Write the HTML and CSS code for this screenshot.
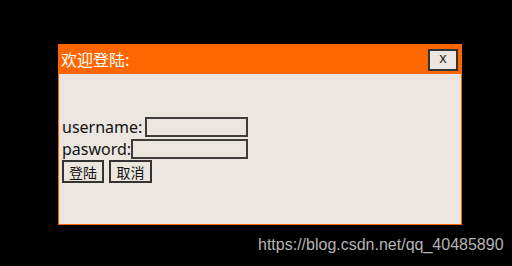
FILE: index.html
```html
<!DOCTYPE html>
<html>
<head>
<meta charset="utf-8">
<link rel="stylesheet" href="styles.css">
</head>
<body>
<div class="stage">
  <div class="dialog">
    <div class="dialog-head">
      <span class="dialog-title">欢迎登陆:</span>
      <button class="close-btn">x</button>
    </div>
    <div class="dialog-body">
      <div class="row"><label class="lbl">username:</label><input class="field field-user" type="text"></div>
      <div class="row"><label class="lbl">pasword:</label><input class="field field-pass" type="password"></div>
      <div class="row actions"><button class="btn">登陆</button><button class="btn">取消</button></div>
    </div>
  </div>
  <div class="watermark">https://blog.csdn.net/qq_40485890</div>
</div>
</body>
</html>
```
FILE: styles.css
```css
html, body {
  margin: 0;
  padding: 0;
  background: #000;
}
.stage {
  width: 512px;
  height: 266px;
  position: relative;
  padding: 44px 0 0 58px;
  box-sizing: border-box;
}
.dialog {
  width: 404px;
  height: 181px;
  box-sizing: border-box;
  border: 1px solid #ff6600;
  background: #ebe6e0;
  display: flex;
  flex-direction: column;
  font-family: "Noto Sans", "Noto Sans CJK SC", sans-serif;
}
.dialog-head {
  height: 30px;
  margin: -1px -1px 0 -1px;
  background: #ff6600;
  display: flex;
  align-items: center;
  justify-content: space-between;
  padding: 0 4px 0 3px;
}
.dialog-title {
  color: #fff;
  font-size: 16px;
  line-height: 20px;
  font-family: "Noto Sans CJK SC", sans-serif;
}
.close-btn {
  width: 30px;
  height: 22px;
  box-sizing: border-box;
  border: 2px solid #333;
  background: #ebe6e0;
  color: #222;
  font-family: "Noto Sans", sans-serif;
  font-size: 14px;
  line-height: 14px;
  padding: 0 0 3px 0;
  margin-top: 1px;
}
.dialog-body {
  padding: 42px 0 0 3px;
  display: flex;
  flex-direction: column;
}
.row {
  display: flex;
  align-items: center;
  height: 22px;
  font-size: 16px;
  color: #111;
}
.lbl {
  line-height: 20px;
}
.field {
  box-sizing: border-box;
  height: 20px;
  border: 2px solid #3c3c3c;
  background: #ebe6e0;
  margin: 0;
  padding: 0;
}
.field-user {
  width: 103px;
  margin-left: 3px;
}
.field-pass {
  width: 117px;
}
.actions {
  height: 23px;
  gap: 5px;
}
.btn {
  box-sizing: border-box;
  width: 42px;
  height: 23px;
  border: 2px solid #333;
  background: #ebe6e0;
  font-family: "Noto Sans CJK SC", sans-serif;
  font-size: 14px;
  color: #111;
  padding: 0;
  margin: 0;
}
.actions .btn + .btn {
  width: 43px;
}
.watermark {
  position: absolute;
  left: 258px;
  top: 236px;
  color: #b4b4b4;
  font-family: "Liberation Sans", Arial, sans-serif;
  font-size: 16px;
  line-height: 18px;
}
```
